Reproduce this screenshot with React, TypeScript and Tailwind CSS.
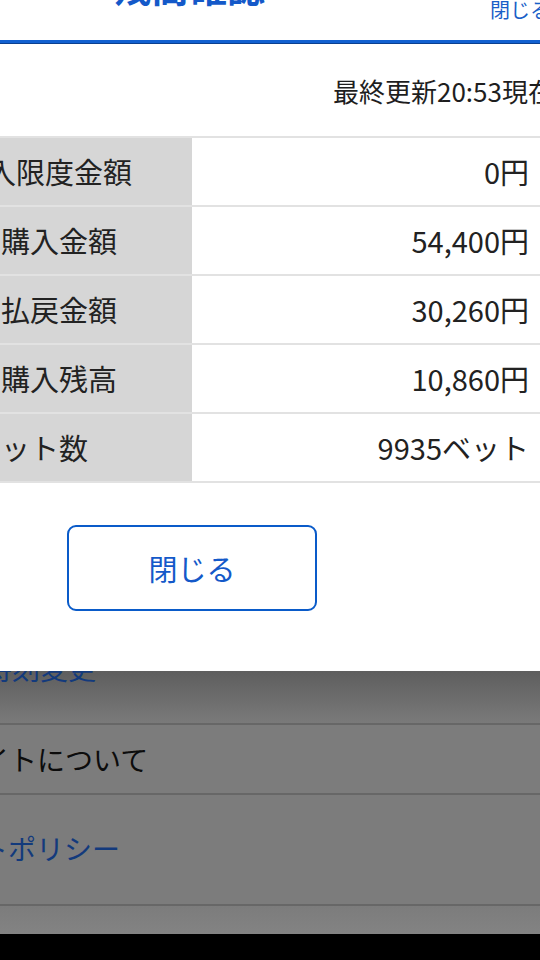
import React from "react"

const rows = [
  { label: "購入限度金額", value: "0円", indent: "ml-[15px]" },
  { label: "本日購入金額", value: "54,400円", indent: "ml-0" },
  { label: "本日払戻金額", value: "30,260円", indent: "ml-0" },
  { label: "本日購入残高", value: "10,860円", indent: "ml-0" },
  { label: "総ベット数", value: "9935ベット", indent: "ml-0" },
]

export default function App() {
  return (
    <div
      className="flex w-[540px] h-[960px] flex-col overflow-hidden bg-white"
      style={{ fontFamily: '"Noto Sans CJK JP", "Noto Sans", sans-serif' }}
    >
      {/* modal header */}
      <div className="flex h-[40px] shrink-0 items-start bg-white">
        <div className="ml-[113px] -mt-[33px] h-[38px] whitespace-nowrap text-[38px] font-bold leading-none text-[#1459c9]">
          残高確認
        </div>
        <div className="ml-auto -mr-[10px] h-[20px] whitespace-nowrap text-[20px] leading-none text-[#1a5fc8]">
          閉じる
        </div>
      </div>
      <div className="h-[3px] shrink-0 bg-[#1160d0]" />
      <div className="h-[1px] shrink-0 bg-[#0a3f8f]" />

      {/* modal body */}
      <div className="relative z-10 flex shrink-0 flex-col bg-white">
        <div className="mt-[34px] h-[26px] whitespace-nowrap pl-[333px] text-[26px] leading-none text-[#1e1e1e]">
          最終更新20:53現在
        </div>

        <div className="mt-[32px] -ml-[80px] w-[640px] border-t-2 border-[#e2e2e2]">
          {rows.map((r) => (
            <div key={r.label} className="flex h-[69px] border-b-2 border-[#e2e2e2]">
              <div className="flex w-[272px] items-center bg-[#d6d6d6] pl-[23px]">
                <span className={`whitespace-nowrap text-[29px] leading-none text-[#222] ${r.indent}`}>
                  {r.label}
                </span>
              </div>
              <div className="flex w-[368px] items-center justify-end bg-white pr-[31px]">
                <span className="whitespace-nowrap text-[29px] leading-none text-[#222]">{r.value}</span>
              </div>
            </div>
          ))}
        </div>

        <div className="pb-[60px] pt-[42px]">
          <button className="ml-[67px] flex h-[86px] w-[250px] items-center justify-center rounded-[9px] border-2 border-[#0a5bc9] bg-white text-[29px] leading-none text-[#1459c9]">
            閉じる
          </button>
        </div>
      </div>

      {/* dimmed page behind */}
      <div className="flex shrink-0 flex-col bg-[#7c7c7c]">
        <div className="flex h-[52px] flex-col bg-gradient-to-b from-[#5e5e5e] to-[#7a7a7a]">
          <div className="-mt-[17px] -ml-[72px] whitespace-nowrap text-[28px] leading-none text-[#133a7c]">
            締切時刻変更
          </div>
        </div>
        <div className="h-[2px] bg-[#676767]" />
        <div className="flex h-[68px] items-center">
          <span className="-ml-[47px] whitespace-nowrap text-[28px] leading-none text-[#0c0c0c]">
            サイトについて
          </span>
        </div>
        <div className="h-[2px] bg-[#676767]" />
        <div className="flex h-[109px] items-center pb-[4px]">
          <span className="-ml-[76px] whitespace-nowrap text-[28px] leading-none text-[#133a7c]">
            サイトポリシー
          </span>
        </div>
        <div className="h-[2px] bg-[#676767]" />
        <div className="h-[28px] bg-gradient-to-b from-[#7c7c7c] to-[#838383]" />
      </div>
      <div className="flex-1 bg-black" />
    </div>
  )
}
